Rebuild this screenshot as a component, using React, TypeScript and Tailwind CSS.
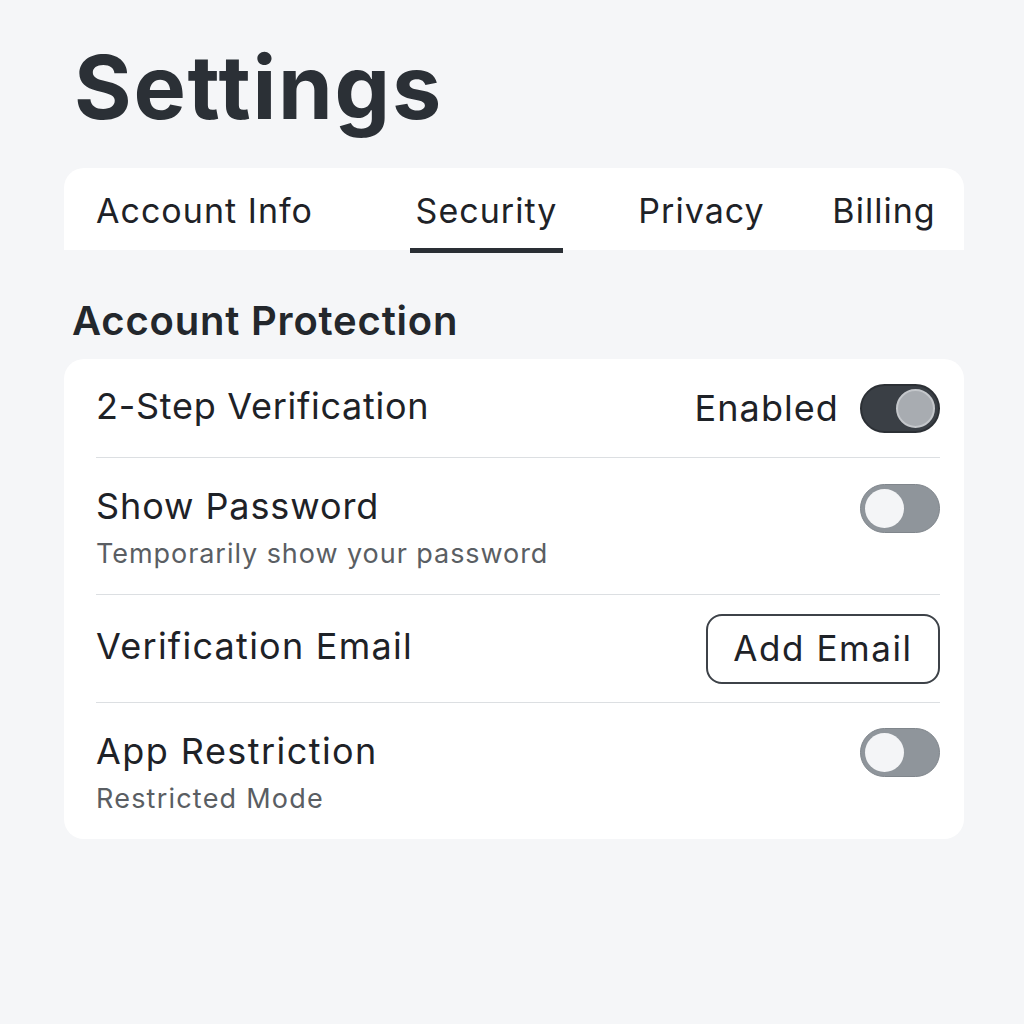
import React from "react";

const font = { fontFamily: "Inter, 'Noto Sans', sans-serif" };

function Toggle({ on }: { on: boolean }) {
  if (on) {
    return (
      <div className="relative w-[80px] h-[49px] shrink-0 rounded-full bg-[#3a3f45] border-2 border-[#2c3035]">
        <div className="absolute right-[3px] top-[3px] w-[39px] h-[39px] rounded-full bg-[#a8acb1] border-2 border-[#c4c7cb]" />
      </div>
    );
  }
  return (
    <div className="relative w-[80px] h-[49px] shrink-0 rounded-full bg-[#8f959b] border border-[#80868c]">
      <div className="absolute left-[4px] top-[4px] w-[39px] h-[39px] rounded-full bg-[#f4f5f7]" />
    </div>
  );
}

export default function App() {
  return (
    <div className="min-h-screen w-full bg-[#f5f6f8] px-16 pt-[37px] text-[#1e2227]" style={font}>
      <h1 className="text-[88px] leading-[100px] font-bold text-[#2b3036] pl-[10px] tracking-[0.02em]">Settings</h1>

      <div className="mt-[31px] h-[82px] w-[900px] bg-white rounded-t-[20px] flex items-stretch pl-6">
        <div className="w-[322px] px-2 flex items-center pt-[3px] text-[34px] tracking-[0.03em]">Account Info</div>
        <div className="relative w-[153px] flex items-center justify-center pt-[3px] text-[34px] tracking-[0.03em]">
          Security
          <div className="absolute left-0 right-0 bottom-[-3px] h-[5px] bg-[#2a2f35]" />
        </div>
        <div className="ml-[70px] w-[137px] flex items-center justify-center pt-[3px] text-[34px] tracking-[0.03em]">Privacy</div>
        <div className="ml-[54px] w-[120px] flex items-center justify-center pt-[3px] text-[34px] tracking-[0.03em]">Billing</div>
      </div>

      <h2 className="mt-[47px] pl-[8px] text-[40px] leading-[47px] font-semibold text-[#23272c] tracking-[0.02em]">Account Protection</h2>

      <div className="mt-[15px] w-[900px] bg-white rounded-[20px] pl-8 pr-6">
        <div className="h-[99px] flex items-center justify-between border-b border-[#dcdfe2]">
          <div className="text-[36px] leading-[44px] tracking-[0.02em] pb-[4px]">2-Step Verification</div>
          <div className="flex items-center gap-[21px]">
            <span className="text-[36px] leading-[44px] tracking-[0.03em]">Enabled</span>
            <Toggle on />
          </div>
        </div>

        <div className="h-[137px] flex items-start justify-between border-b border-[#dcdfe2]">
          <div className="pt-[26px]">
            <div className="text-[36px] leading-[44px] tracking-[0.025em]">Show Password</div>
            <div className="mt-[9px] text-[27px] leading-[34px] tracking-[0.035em] text-[#5a5e63]">Temporarily show your password</div>
          </div>
          <div className="mt-[26px]"><Toggle on={false} /></div>
        </div>

        <div className="h-[108px] flex items-center justify-between border-b border-[#dcdfe2]">
          <div className="text-[36px] leading-[44px] tracking-[0.035em] pb-[6px]">Verification Email</div>
          <button className="w-[234px] h-[70px] rounded-[16px] border-2 border-[#3d4248] bg-white text-[35px] tracking-[0.045em] text-[#1e2227]">Add Email</button>
        </div>

        <div className="h-[136px] flex items-start justify-between">
          <div className="pt-[26px]">
            <div className="text-[36px] leading-[44px] tracking-[0.04em]">App Restriction</div>
            <div className="mt-[9px] text-[27px] leading-[34px] tracking-[0.045em] text-[#5a5e63]">Restricted Mode</div>
          </div>
          <div className="mt-[25px]"><Toggle on={false} /></div>
        </div>
      </div>
    </div>
  );
}
